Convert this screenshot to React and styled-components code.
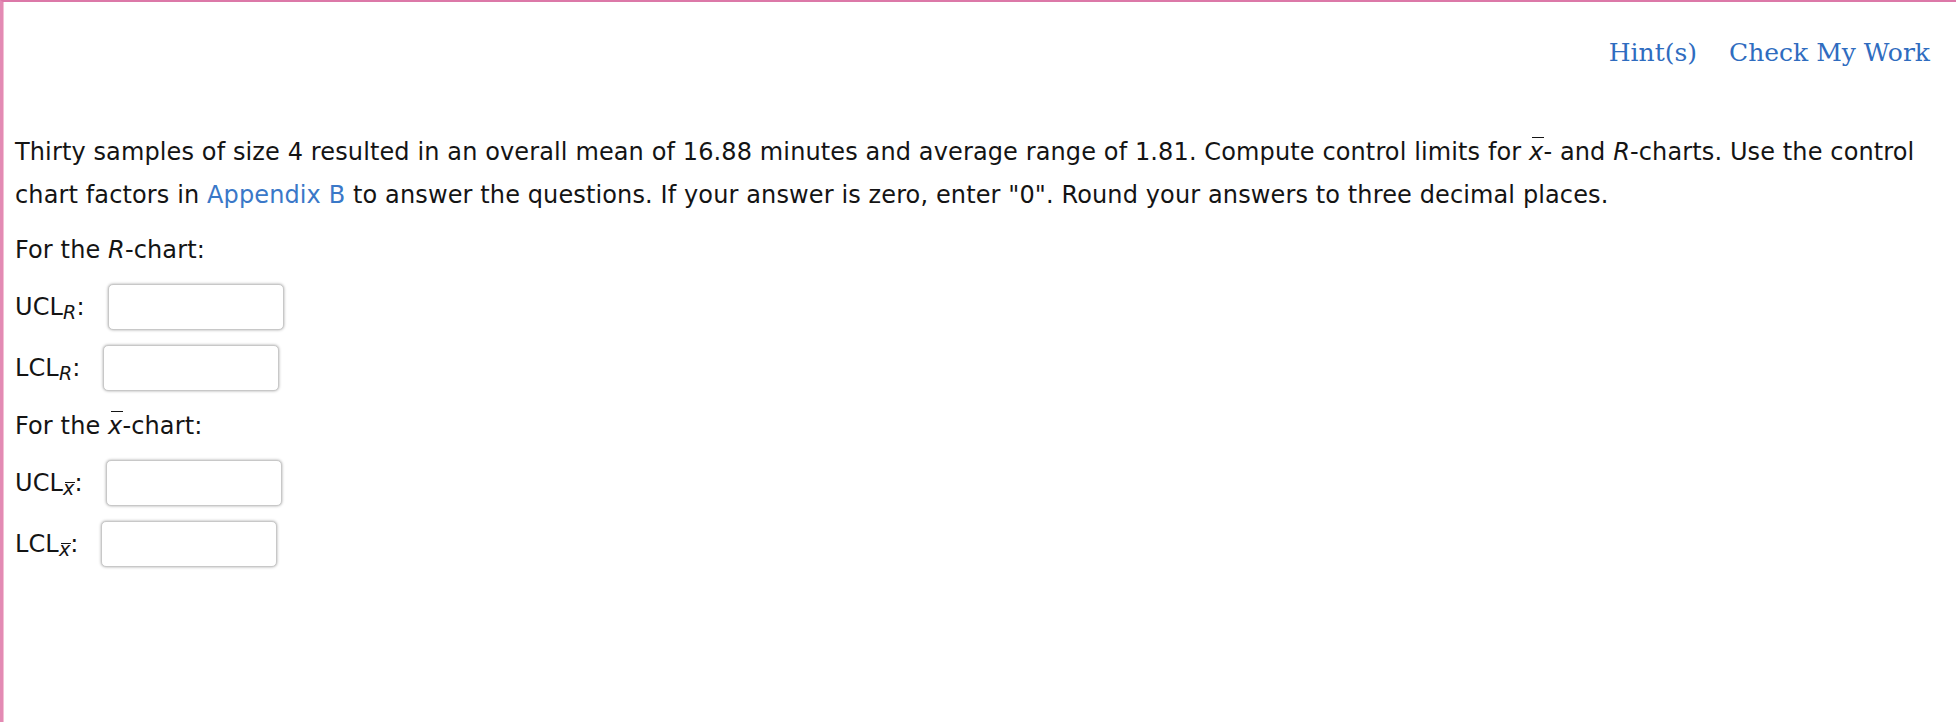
import React from "react";
import styled, { createGlobalStyle } from "styled-components";

const GlobalStyle = createGlobalStyle`
  html, body {
    margin: 0;
    padding: 0;
    background: #fff;
  }
`;

const rows = [
  {
    heading: "R",
    fields: [
      { name: "UCL", sub: "R", bar: false },
      { name: "LCL", sub: "R", bar: false },
    ],
  },
  {
    heading: "x",
    fields: [
      { name: "UCL", sub: "x", bar: true },
      { name: "LCL", sub: "x", bar: true },
    ],
  },
];

export default function App() {
  return (
    <>
      <GlobalStyle />
      <Frame>
        <Toolbar>
          <ToolLink>Hint(s)</ToolLink>
          <ToolLink>Check My Work</ToolLink>
        </Toolbar>
        <Body>
          <Question>
            Thirty samples of size 4 resulted in an overall mean of 16.88 minutes and
            average range of 1.81. Compute control limits for <Bar>x</Bar>- and{" "}
            <Var>R</Var>-charts. Use the control chart factors in{" "}
            <Link>Appendix B</Link> to answer the questions. If your answer is zero,
            enter "0". Round your answers to three decimal places.
          </Question>
          {rows.map((group, i) => (
            <Group key={i}>
              <Heading>
                For the {group.heading === "x" ? <Bar>x</Bar> : <Var>R</Var>}-chart:
              </Heading>
              {group.fields.map((f, j) => (
                <Row key={j}>
                  <Label>
                    {f.name}
                    {f.bar ? <SubBar>{f.sub}</SubBar> : <Sub>{f.sub}</Sub>}:
                  </Label>
                  <Answer type="text" />
                </Row>
              ))}
            </Group>
          ))}
        </Body>
      </Frame>
    </>
  );
}

const Frame = styled.div`
  box-sizing: border-box;
  min-height: 100vh;
  border-top: 2px solid #dc78a8;
  border-left: 3px solid #e38ab4;
  box-shadow: inset 1px 0 0 #f3c0d4;
  display: flex;
  flex-direction: column;
`;

const Toolbar = styled.div`
  display: flex;
  justify-content: flex-end;
  gap: 32px;
  padding: 36px 26px 0 0;
`;

const ToolLink = styled.a`
  font-family: "DejaVu Serif", Georgia, serif;
  font-size: 25px;
  color: #2f6cbf;
  cursor: pointer;
`;

const Body = styled.div`
  padding: 64px 16px 0 12px;
  font-family: "DejaVu Sans", Verdana, sans-serif;
  font-size: 24px;
  letter-spacing: 0.12px;
  color: #141414;
`;

const Question = styled.p`
  margin: 0;
  line-height: 43px;
`;

const Group = styled.div`
  display: flex;
  flex-direction: column;
  margin-top: 12px;
  & + & {
    margin-top: 14px;
  }
`;

const Heading = styled.div`
  line-height: 43px;
  margin-bottom: 12px;
`;

const Row = styled.div`
  display: flex;
  align-items: center;
  height: 46px;
  margin-bottom: 15px;
  &:last-child {
    margin-bottom: 0;
  }
`;

const Label = styled.span`
  margin-right: 23px;
`;

const Var = styled.i``;

const Bar = styled.i`
  position: relative;
  display: inline-block;
  &::after {
    content: "";
    position: absolute;
    left: 0.12em;
    right: -0.02em;
    top: 0.26em;
    border-top: 1.5px solid currentColor;
  }
`;

const Sub = styled.i`
  font-size: 19px;
  position: relative;
  top: 4px;
`;

const SubBar = styled(Bar)`
  font-size: 19px;
  top: 4px;
`;

const Link = styled.a`
  color: #3a78c8;
  cursor: pointer;
`;

const Answer = styled.input`
  box-sizing: border-box;
  width: 176px;
  height: 46px;
  border: 1px solid #c8c8c8;
  border-radius: 5px;
  box-shadow: 0 0 3px rgba(0, 0, 0, 0.35);
  outline: none;
  padding: 0 8px;
  font-family: "DejaVu Sans", Verdana, sans-serif;
  font-size: 20px;
`;
